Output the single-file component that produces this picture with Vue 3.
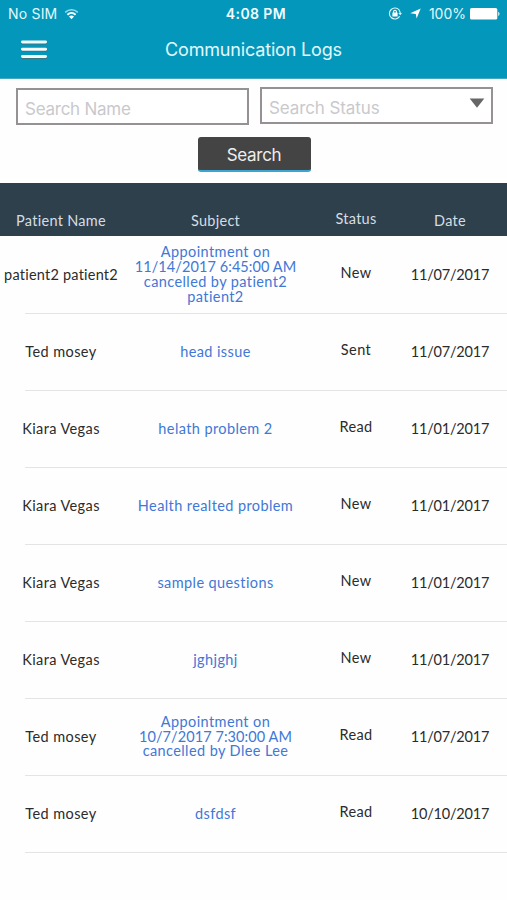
<script setup>
const rows = [
  { name: 'patient2 patient2', subject: ['Appointment on', '11/14/2017 6:45:00 AM', 'cancelled by patient2', 'patient2'], status: 'New', date: '11/07/2017' },
  { name: 'Ted mosey', subject: ['head issue'], status: 'Sent', date: '11/07/2017' },
  { name: 'Kiara Vegas', subject: ['helath problem 2'], status: 'Read', date: '11/01/2017' },
  { name: 'Kiara Vegas', subject: ['Health realted problem'], status: 'New', date: '11/01/2017' },
  { name: 'Kiara Vegas', subject: ['sample questions'], status: 'New', date: '11/01/2017' },
  { name: 'Kiara Vegas', subject: ['jghjghj'], status: 'New', date: '11/01/2017' },
  { name: 'Ted mosey', subject: ['Appointment on', '10/7/2017 7:30:00 AM', 'cancelled by Dlee Lee'], status: 'Read', date: '11/07/2017' },
  { name: 'Ted mosey', subject: ['dsfdsf'], status: 'Read', date: '10/10/2017' },
]
const startsWithDigit = (text) => /^\d/.test(text)
const hasDigit = (text) => /\d/.test(text)
</script>

<template>
  <div class="screen">
    <header class="top">
      <div class="statusbar">
        <div class="side">
          <span class="carrier">No SIM</span>
          <svg class="wifi" width="15" height="12" viewBox="0 0 15 12">
            <path d="M1.2 4.4C4.8 1 10.2 1 13.8 4.4" fill="none" stroke="#8fdcec" stroke-width="1.5" />
            <path d="M3.4 6.7C5.8 4.5 9.2 4.5 11.6 6.7" fill="none" stroke="#fff" stroke-width="1.9" />
            <path d="M5 8.5C6.6 7.2 8.4 7.2 10 8.5L7.5 11.2Z" fill="#fff" />
          </svg>
        </div>
        <span class="clock">4:08 PM</span>
        <div class="side right">
          <svg class="lock" width="14" height="13" viewBox="0 0 14 13">
            <path d="M11.4 3.3A5.5 5.5 0 1 0 11.6 9.4" fill="none" stroke="#e4f9fd" stroke-width="1.1" />
            <path d="M11.2 3.2A5.5 5.5 0 0 1 12.2 6" fill="none" stroke="#e4f9fd" stroke-width="1.1" />
            <path d="M10.4 6H14L12.2 8.3Z" fill="#e4f9fd" />
            <rect x="4.4" y="5.6" width="5.2" height="4" rx=".5" fill="#fff" />
            <path d="M5.6 6V4.7a1.4 1.4 0 0 1 2.8 0V6" fill="none" stroke="#fff" stroke-width="1.1" />
          </svg>
          <svg class="arrow" width="11" height="11" viewBox="0 0 11 11">
            <path d="M10.7.4L6.6 10.6L5.8 6L.2 5.2Z" fill="#fff" />
          </svg>
          <span class="percent">100%</span>
          <svg class="battery" width="30" height="12" viewBox="0 0 30 12">
            <rect x="0" y="0" width="27.3" height="11.6" rx="1.6" fill="#fff" />
            <path d="M28.2 3.8C30 4.4 30 7.4 28.2 8Z" fill="#d8f5fa" />
          </svg>
        </div>
      </div>
      <div class="navbar">
        <svg class="menu" width="28" height="21" viewBox="0 0 28 21">
          <g fill="#3c7580">
            <rect x="1" y="2.4" width="26" height="3" rx="1.5" />
            <rect x="1" y="9.7" width="26" height="3" rx="1.5" />
            <rect x="1" y="17" width="26" height="3" rx="1.5" />
          </g>
          <g fill="#f2fdff">
            <rect x="1" y="1.4" width="26" height="3" rx="1.4" />
            <rect x="1" y="8.7" width="26" height="3" rx="1.4" />
            <rect x="1" y="16" width="26" height="3" rx="1.4" />
          </g>
        </svg>
        <h1 class="title">Communication Logs</h1>
      </div>
    </header>

    <form class="filters" @submit.prevent>
      <div class="fields">
        <div class="field name-field"><span>Search Name</span></div>
        <div class="field status-field">
          <span>Search Status</span>
          <svg class="caret" width="16" height="10" viewBox="0 0 16 10"><path d="M.7.4H15.3L8 9.8Z" fill="#666" /></svg>
        </div>
      </div>
      <button class="search">Search</button>
    </form>

    <div class="grid head">
      <span>Patient Name</span>
      <span>Subject</span>
      <span class="up">Status</span>
      <span>Date</span>
    </div>

    <div class="list">
      <div v-for="(row, i) in rows" :key="i" class="grid row">
        <span :class="{ snug: hasDigit(row.name) }">{{ row.name }}</span>
        <div class="subject">
          <div v-for="line in row.subject" :key="line" :class="{ tight: startsWithDigit(line) }">{{ line }}</div>
        </div>
        <span class="up">{{ row.status }}</span>
        <span class="date">{{ row.date }}</span>
      </div>
    </div>
  </div>
</template>

<style>
body {
  margin: 0;
  background: #fefefe;
}
</style>

<style scoped>
.screen {
  width: 507px;
  height: 900px;
  overflow: hidden;
  background: #fefefe;
  font-family: Inter, sans-serif;
}
.top {
  box-sizing: border-box;
  height: 79px;
  background: #0397bb;
  border-bottom: 1px solid #45a7c0;
  color: #e2f8fc;
}
.statusbar {
  display: grid;
  grid-template-columns: 1fr auto 1fr;
  align-items: center;
  height: 27px;
  padding: 0 7px 0 8px;
  font-size: 14px;
  line-height: 27px;
}
.side {
  display: flex;
  align-items: center;
}
.right {
  justify-content: flex-end;
}
.carrier {
  letter-spacing: 0.2px;
}
.wifi {
  margin-left: 7px;
}
.clock {
  padding-left: 4px;
  font-weight: 600;
  color: #f2fcfe;
  letter-spacing: 0.4px;
}
.arrow {
  margin-left: 8px;
}
.percent {
  margin: 0 4px 0 8px;
}
.navbar {
  display: grid;
  grid-template-columns: 28px 1fr 28px;
  align-items: center;
  height: 45px;
  padding: 0 20px;
}
.title {
  margin: 0;
  text-align: center;
  font-size: 18px;
  font-weight: 400;
  line-height: 45px;
  letter-spacing: -0.17px;
}
.filters {
  box-sizing: border-box;
  height: 104px;
  padding-top: 8px;
  display: flex;
  flex-direction: column;
  align-items: center;
}
.fields {
  align-self: stretch;
  display: flex;
  gap: 11px;
  padding: 0 14px 0 16px;
}
.field {
  box-sizing: border-box;
  width: 233px;
  height: 37px;
  display: flex;
  align-items: center;
  border: 2px solid #969294;
  padding: 4px 7px 0;
  background: #fff;
  color: #c9c9cd;
  font-size: 17px;
  letter-spacing: -0.25px;
}
.name-field {
  margin-top: 1px;
}
.status-field {
  justify-content: space-between;
  padding: 4px 6px 0 7px;
  letter-spacing: -0.1px;
}
.caret {
  margin-top: -9px;
}
.search {
  box-sizing: border-box;
  width: 113px;
  height: 35px;
  margin: 12px 0 0 1px;
  padding: 2px 0 0;
  border: 0;
  border-bottom: 2px solid #38a5d2;
  border-radius: 3px;
  background: #444;
  color: #eee;
  font-family: Inter, sans-serif;
  font-size: 17px;
  letter-spacing: -0.3px;
}
.grid {
  display: grid;
  grid-template-columns: 122px 187px 94px 94px;
  align-items: center;
  text-align: center;
  font-family: Lato, sans-serif;
  font-size: 14.5px;
  line-height: 14.8px;
  letter-spacing: 0.4px;
}
.head {
  box-sizing: border-box;
  height: 53px;
  padding-top: 24px;
  background: #2f404d;
  color: #d5dde2;
  letter-spacing: 0.28px;
}
.list {
  padding-top: 1px;
}
.row {
  box-sizing: border-box;
  height: 77px;
  padding-bottom: 1px;
  color: #2b2b2b;
  background: linear-gradient(#e4e4e4, #e4e4e4) 25px 76px / 482px 1px no-repeat;
}
.subject {
  color: #3f78d6;
}
.snug {
  letter-spacing: 0.22px;
}
.tight {
  letter-spacing: 0.08px;
}
.date {
  letter-spacing: -0.2px;
}
.up {
  padding-bottom: 4px;
}
</style>
